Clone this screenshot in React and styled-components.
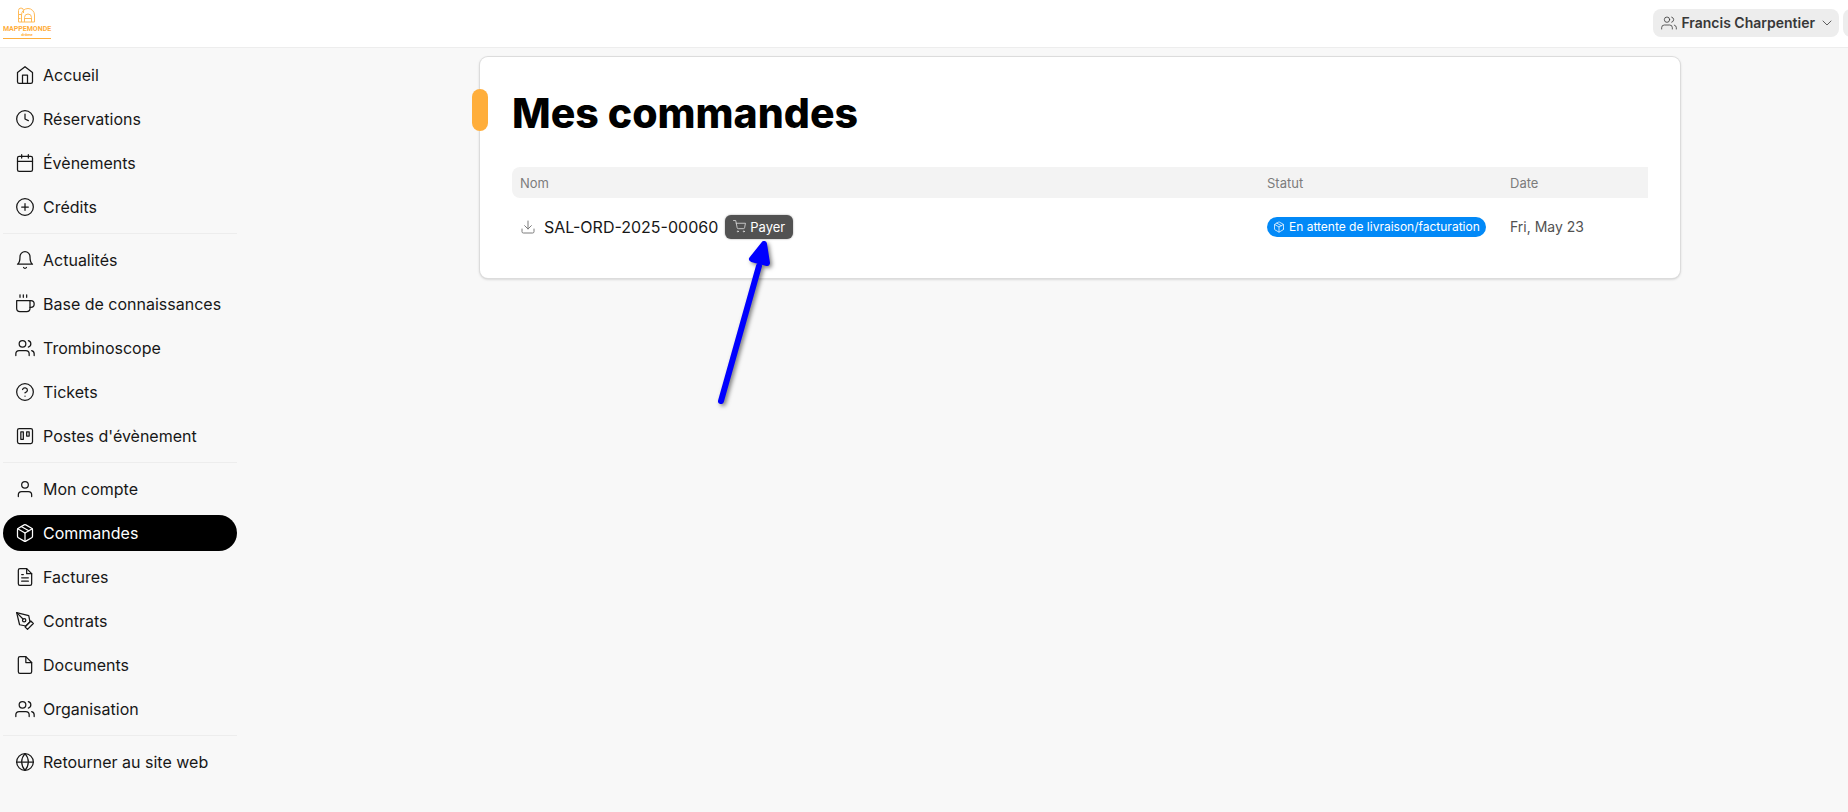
import styled, { createGlobalStyle, css } from 'styled-components';
import {
  FiBell,
  FiCalendar,
  FiChevronDown,
  FiClock,
  FiCoffee,
  FiDownload,
  FiFile,
  FiFileText,
  FiGlobe,
  FiHelpCircle,
  FiHome,
  FiPackage,
  FiPenTool,
  FiPlusCircle,
  FiShoppingCart,
  FiTrello,
  FiUser,
  FiUsers,
} from 'react-icons/fi';

const sections = [
  [
    { label: 'Accueil', icon: FiHome },
    { label: 'Réservations', icon: FiClock },
    { label: 'Évènements', icon: FiCalendar },
    { label: 'Crédits', icon: FiPlusCircle },
  ],
  [
    { label: 'Actualités', icon: FiBell },
    { label: 'Base de connaissances', icon: FiCoffee },
    { label: 'Trombinoscope', icon: FiUsers },
    { label: 'Tickets', icon: FiHelpCircle },
    { label: "Postes d'évènement", icon: FiTrello },
  ],
  [
    { label: 'Mon compte', icon: FiUser },
    { label: 'Commandes', icon: FiPackage, active: true },
    { label: 'Factures', icon: FiFileText },
    { label: 'Contrats', icon: FiPenTool },
    { label: 'Documents', icon: FiFile },
    { label: 'Organisation', icon: FiUsers },
  ],
  [{ label: 'Retourner au site web', icon: FiGlobe }],
];

const orders = [
  {
    name: 'SAL-ORD-2025-00060',
    status: 'En attente de livraison/facturation',
    date: 'Fri, May 23',
  },
];

const Logo = () => (
  <svg width="49" height="34" viewBox="0 0 49 34" role="img" aria-label="Mappemonde">
    <g fill="none" stroke="#ffae3b" strokeWidth="1" opacity="0.85">
      <path d="M15.5 16V4.500a2.500 2.500 0 0 1 5 0V7" />
      <path d="M15.5 8.500h3M15.5 12.500h2" />
      <path d="M18.500 16V9a6.500 6.500 0 0 1 13 0v7h-16" />
      <path d="M21.500 16v-4.500a3.500 3.500 0 0 1 7 0V16M21.500 12.500h7" />
    </g>
    <text x="24" y="25" textAnchor="middle" fontFamily="Roboto, sans-serif" fontWeight="700" fontSize="7" fill="#ffae3b">
      MAPPEMONDE
    </text>
    <text x="24" y="30" textAnchor="middle" fontFamily="Roboto, sans-serif" fontWeight="700" fontSize="4" fill="#ffae3b">
      drôme
    </text>
    <path d="M0 32.500h48" stroke="#ffae3b" strokeWidth="1" />
  </svg>
);

const App = () => {
  return (
    <>
      <GlobalStyle />
      <Page>
        <Header>
          <LogoLink href="#">
            <Logo />
          </LogoLink>
          <HeaderActions>
            <HeaderButton type="button">
              <FiUsers size={16} />
              Francis Charpentier
              <FiChevronDown size={16} />
            </HeaderButton>
            <HeaderButton type="button" aria-label="Menu" />
          </HeaderActions>
        </Header>
        <Body>
          <Sidebar>
            {sections.map((items, i) => (
              <NavList key={i}>
                {items.map(({ label, icon: Icon, active }) => (
                  <li key={label}>
                    <NavLink href="#" $active={active} aria-current={active ? 'page' : undefined}>
                      <Icon size={20} />
                      {label}
                    </NavLink>
                  </li>
                ))}
              </NavList>
            ))}
          </Sidebar>
          <Main>
            <Card>
              <Title>Mes commandes</Title>
              <Table>
                <thead>
                  <tr>
                    <Th>Nom</Th>
                    <Th $width="243px">Statut</Th>
                    <Th $width="146px">Date</Th>
                  </tr>
                </thead>
                <tbody>
                  {orders.map((order) => (
                    <tr key={order.name}>
                      <Td>
                        <OrderCell>
                          <OrderLink href="#">
                            <FiDownload size={16} />
                            {order.name}
                          </OrderLink>
                          <PayWrap>
                            <PayButton type="button">
                              <FiShoppingCart size={13} />
                              Payer
                            </PayButton>
                            <Arrow width="80" height="180" viewBox="0 0 80 180" aria-hidden="true">
                              <path d="M15 167 53 32" />
                              <path d="M58 10 46 25l15 4Z" fill="#00f" />
                            </Arrow>
                          </PayWrap>
                        </OrderCell>
                      </Td>
                      <Td>
                        <Badge>
                          <FiPackage size={12} />
                          {order.status}
                        </Badge>
                      </Td>
                      <Td>{order.date}</Td>
                    </tr>
                  ))}
                </tbody>
              </Table>
            </Card>
          </Main>
        </Body>
      </Page>
    </>
  );
};

const GlobalStyle = createGlobalStyle`
  * {
    box-sizing: border-box;
  }

  html,
  body {
    margin: 0;
    overflow-x: hidden;
    background: #f8f8f8;
  }

  body {
    color: #171717;
    font-family: Inter, 'Liberation Sans', sans-serif;
    font-size: 16px;
    line-height: 24px;
  }

  button {
    border: 0;
    font: inherit;
    cursor: pointer;
  }

  svg {
    flex: none;
    stroke-width: 1.5;
  }
`;

/* the right end of the header runs past the viewport */
const Page = styled.div`
  width: calc(100% + 72px);
  min-height: 100vh;
  background: #f8f8f8;
`;

const Header = styled.header`
  display: flex;
  align-items: center;
  justify-content: space-between;
  height: 48px;
  padding: 0 3px 1px;
  border-bottom: 1px solid #ededed;
  background: #fff;
`;

const LogoLink = styled.a`
  display: flex;
`;

const HeaderActions = styled.div`
  display: flex;
  gap: 4px;
`;

const HeaderButton = styled.button`
  display: flex;
  align-items: center;
  gap: 4px;
  height: 28px;
  min-width: 74px;
  padding: 0 4px 0 8px;
  border-radius: 8px;
  background: #ededed;
  color: #383838;
  font-size: 14px;
  font-weight: 600;

  svg {
    stroke-width: 1.2;
  }
`;

const Body = styled.div`
  display: flex;
  gap: 3px;
`;

const Sidebar = styled.nav`
  flex: none;
  width: 237px;
  padding: 9px 0 9px 3px;
`;

const NavList = styled.ul`
  display: flex;
  flex-direction: column;
  gap: 8px;
  margin: 0;
  padding: 0;
  list-style: none;

  & + & {
    margin-top: 8px;
    padding-top: 8px;
    border-top: 1px solid #ededed;
  }
`;

const NavLink = styled.a`
  display: flex;
  align-items: center;
  gap: 8px;
  height: 36px;
  padding: 0 12px;
  border-radius: 18px;
  color: #171717;
  text-decoration: none;

  ${(props) =>
    props.$active &&
    css`
      background: #000;
      color: #fff;
    `}
`;

const Main = styled.main`
  flex: 1;
  min-width: 0;
  padding: 9px 24px 24px;
`;

const Card = styled.section`
  max-width: 1200px;
  margin: 0 auto;
  padding: 32px;
  border-radius: 8px;
  background: #fff;
  box-shadow: 0 0 0 1px #dcdcdc, 0 1px 3px rgba(0, 0, 0, 0.25);
`;

const Title = styled.h1`
  position: relative;
  margin: 0 0 30px;
  color: #000;
  font-size: 41px;
  font-weight: 800;
  line-height: 48px;

  &::before {
    content: '';
    position: absolute;
    top: 0;
    left: -40px;
    width: 16px;
    height: 42px;
    border-radius: 8px;
    background: #ffae3b;
  }
`;

const Table = styled.table`
  width: 100%;
  border-collapse: separate;
  border-spacing: 0;
  table-layout: fixed;
`;

const Th = styled.th`
  width: ${(props) => props.$width || 'auto'};
  height: 31px;
  padding: 0 8px;
  background: #f3f3f3;
  color: #7c7c7c;
  font-size: 13px;
  font-weight: 400;
  line-height: 20px;
  text-align: left;

  &:first-child {
    border-radius: 8px 0 0 8px;
  }
`;

const Td = styled.td`
  height: 48px;
  padding: 9px 8px 0;
  color: #525252;
  font-size: 14px;
  vertical-align: middle;
  white-space: nowrap;
`;

const OrderCell = styled.div`
  display: flex;
  align-items: center;
  gap: 7px;
`;

const OrderLink = styled.a`
  display: flex;
  align-items: center;
  gap: 8px;
  color: #171717;
  font-size: 16px;
  text-decoration: none;

  svg {
    color: #7c7c7c;
  }
`;

const PayWrap = styled.span`
  position: relative;
  display: flex;
`;

const PayButton = styled.button`
  display: flex;
  align-items: center;
  gap: 4px;
  height: 24px;
  padding: 0 8px;
  border-radius: 6px;
  background: #525252;
  box-shadow: 0 0 2px rgba(0, 0, 0, 0.4);
  color: #fff;
  font-size: 13px;

  svg {
    opacity: 0.8;
  }
`;

const Arrow = styled.svg`
  position: absolute;
  top: 19px;
  left: -19px;
  fill: none;
  stroke: #00f;
  stroke-width: 6;
  stroke-linecap: round;
  stroke-linejoin: round;
  filter: drop-shadow(2px 2px 2px rgba(0, 0, 0, 0.5));
  pointer-events: none;
`;

const Badge = styled.span`
  display: flex;
  align-items: center;
  gap: 4px;
  width: fit-content;
  height: 20px;
  padding: 0 6px;
  border-radius: 10px;
  background: #0289f7;
  color: #fff;
  font-size: 12px;
`;

export default App;
